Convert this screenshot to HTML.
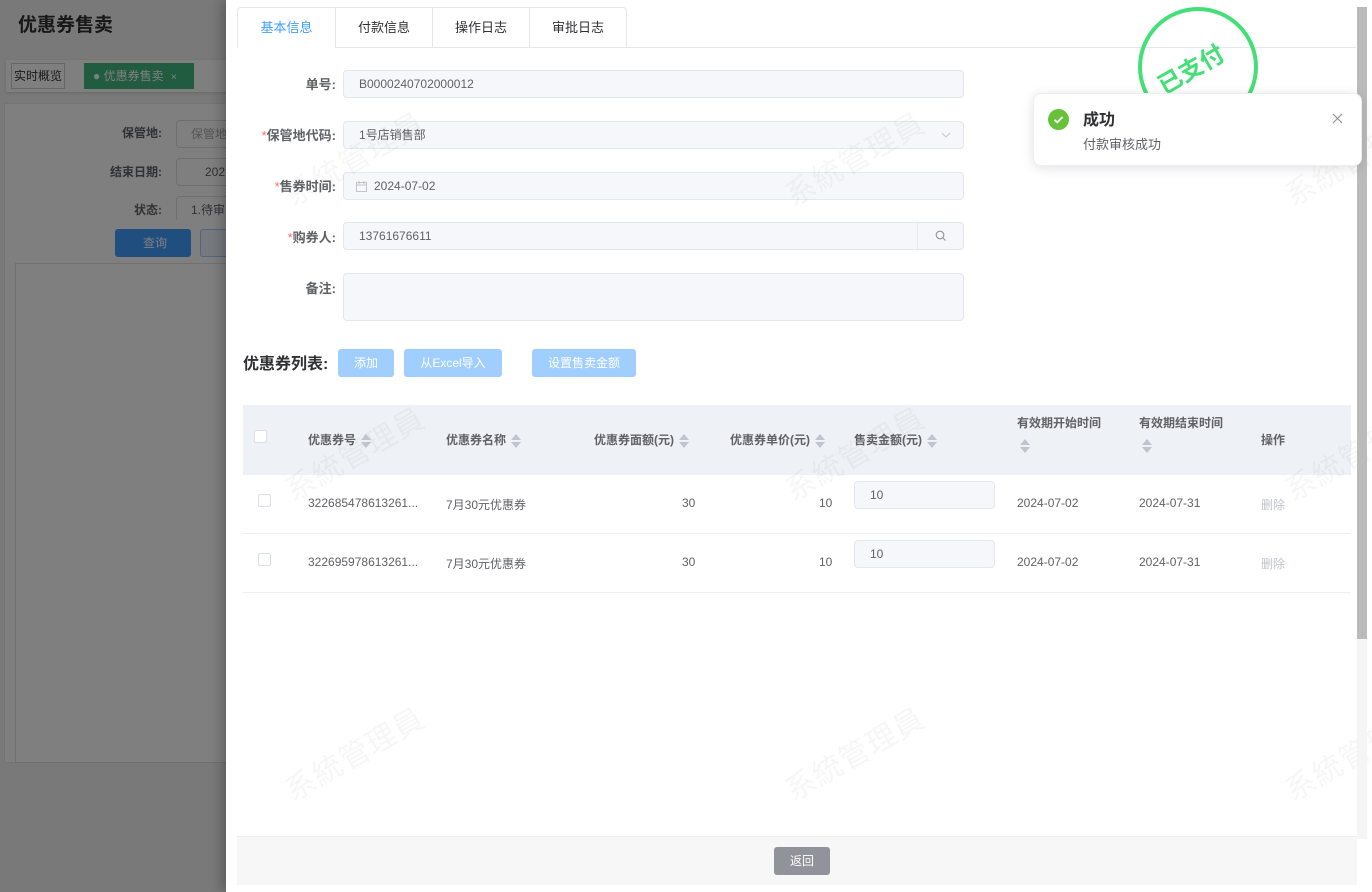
<!DOCTYPE html>
<html><head><meta charset="utf-8"><style>
*{box-sizing:border-box;margin:0;padding:0}
body{width:1372px;height:892px;overflow:hidden;position:relative;font-family:"Liberation Sans","Noto Sans CJK SC",sans-serif;font-size:12px;color:#606266;background:#f3f3f3}
.abs{position:absolute}
.mask{position:absolute;left:0;top:0;width:1372px;height:892px;background:rgba(0,0,0,.5)}
.drawer{position:absolute;left:226px;top:0;width:1146px;height:892px;background:#fff;box-shadow:-4px 0 12px rgba(0,0,0,.25);overflow:hidden}
.tabs{position:absolute;left:11px;top:7px;height:41px;display:flex;border:1px solid #e4e7ed;border-bottom:none;border-radius:4px 4px 0 0}
.tab{width:97px;height:40px;line-height:40px;text-align:center;font-size:13px;color:#303133;border-left:1px solid #e4e7ed}
.tab:first-child{border-left:none;color:#409eff;width:97px}
.tabline{position:absolute;left:110px;top:47px;width:1020px;height:1px;background:#e4e7ed}
.lbl{position:absolute;width:110px;text-align:right;font-size:13px;font-weight:bold;color:#606266}
.lbl i{color:#f56c6c;font-style:normal;font-weight:normal}
.inp{position:absolute;left:117px;width:621px;height:28px;background:#f5f7fa;border:1px solid #e4e7ed;border-radius:4px;line-height:26px;padding-left:15px;color:#606266;font-size:12px}
.btn{position:absolute;height:28px;line-height:28px;text-align:center;color:#fff;background:#a0cfff;border-radius:3px;font-size:12px}
.th{position:absolute;font-weight:bold;color:#606266;font-size:12px}
.sort{display:inline-block;width:10px;height:14px;vertical-align:middle;margin-left:5px;position:relative}
.sort:before{content:"";position:absolute;left:0;top:0;border:5px solid transparent;border-bottom:6px solid #c0c4cc;border-top:0}
.sort:after{content:"";position:absolute;left:0;top:8px;border:5px solid transparent;border-top:6px solid #c0c4cc;border-bottom:0}
.td{position:absolute;font-size:12px;color:#606266}
.cb{position:absolute;width:13px;height:13px;border:1px solid #dcdfe6;border-radius:2px;background:#fff}
.wm{position:absolute;font-size:30px;color:rgba(0,0,0,.035);transform:rotate(-30deg);white-space:nowrap;letter-spacing:1px}
</style></head><body>
<div class="abs" style="left:18px;top:10px;font-size:19px;font-weight:bold;color:#303133">优惠券售卖</div>
<div class="abs" style="left:6px;top:60px;width:230px;height:32px;background:#fff;box-shadow:0 1px 3px rgba(0,0,0,.15)"></div>
<div class="abs" style="left:11px;top:63px;width:54px;height:26px;border:1px solid #ccc;background:#fff;line-height:24px;text-align:center;font-size:12px;color:#333">实时概览</div>
<div class="abs" style="left:84px;top:63px;width:110px;height:26px;background:#42b983;color:#fff;line-height:26px;padding-left:9px;font-size:12px">● 优惠券售卖 <span style="font-size:10px;margin-left:4px">×</span></div>
<div class="abs" style="left:4px;top:103px;width:240px;height:660px;background:#fff;border:1px solid #e8e8e8"></div>
<div class="abs" style="left:100px;top:124px;font-weight:bold;font-size:12px;color:#606266;width:62px;text-align:right">保管地:</div>
<div class="abs" style="left:176px;top:120px;width:60px;height:28px;border:1px solid #dcdfe6;border-radius:4px;padding-left:14px;line-height:26px;color:#aaa">保管地</div>
<div class="abs" style="left:100px;top:163px;font-weight:bold;color:#606266;width:62px;text-align:right">结束日期:</div>
<div class="abs" style="left:176px;top:158px;width:60px;height:28px;border:1px solid #dcdfe6;border-radius:4px;padding-left:28px;line-height:26px;color:#606266">202</div>
<div class="abs" style="left:100px;top:201px;font-weight:bold;color:#606266;width:62px;text-align:right">状态:</div>
<div class="abs" style="left:176px;top:196px;width:60px;height:24px;border:1px solid #dcdfe6;border-bottom:none;border-radius:4px 4px 0 0;padding-left:14px;line-height:26px;color:#606266">1.待审</div>
<div class="abs" style="left:115px;top:229px;width:76px;height:28px;background:#409eff;border-radius:3px;color:#fff;line-height:28px;padding-left:28px">查询</div>
<div class="abs" style="left:200px;top:229px;width:40px;height:28px;border:1px solid #a0cfff;background:#ecf5ff;border-radius:3px"></div>
<div class="abs" style="left:15px;top:263px;width:225px;height:500px;border:1px solid #e0e0e0"></div>
<div class="mask"></div>

<div class="drawer">
  <div class="tabs"><div class="tab">基本信息</div><div class="tab">付款信息</div><div class="tab">操作日志</div><div class="tab">审批日志</div></div>
  <div class="tabline"></div>

  <div class="lbl" style="left:0;top:74px">单号:</div>
  <div class="inp" style="top:70px">B0000240702000012</div>
  <div class="lbl" style="left:0;top:125px"><i>*</i>保管地代码:</div>
  <div class="inp" style="top:121px">1号店销售部<svg style="position:absolute;right:12px;top:9px" width="10" height="8" viewBox="0 0 10 8"><path d="M1 2l4 4 4-4" fill="none" stroke="#c0c4cc" stroke-width="1"/></svg></div>
  <div class="lbl" style="left:0;top:176px"><i>*</i>售券时间:</div>
  <div class="inp" style="top:172px;padding-left:30px"><svg style="position:absolute;left:12px;top:8px" width="11" height="11" viewBox="0 0 11 11"><rect x="0.5" y="1.5" width="10" height="9" fill="none" stroke="#c0c4cc"/><path d="M0.5 4h10M3 0v3M8 0v3" stroke="#c0c4cc"/></svg>2024-07-02</div>
  <div class="lbl" style="left:0;top:227px"><i>*</i>购券人:</div>
  <div class="inp" style="top:222px">13761676611<span style="position:absolute;right:0;top:-1px;width:46px;height:28px;border-left:1px solid #e4e7ed;text-align:center;color:#909399"><svg width="12" height="12" viewBox="0 0 12 12" style="margin-top:8px"><circle cx="5" cy="5" r="3.8" fill="none" stroke="#909399" stroke-width="1.1"/><path d="M8 8l2.5 2.5" stroke="#909399" stroke-width="1.1"/></svg></span></div>
  <div class="lbl" style="left:0;top:278px">备注:</div>
  <div class="inp" style="top:273px;height:48px"></div>

  <div class="abs" style="left:17px;top:350px;font-size:16px;font-weight:bold;color:#303133">优惠券列表:</div>
  <div class="btn" style="left:112px;top:349px;width:56px">添加</div>
  <div class="btn" style="left:178px;top:349px;width:98px">从Excel导入</div>
  <div class="btn" style="left:306px;top:349px;width:104px">设置售卖金额</div>

  <div class="abs" style="left:17px;top:405px;width:1108px;height:70px;background:#eef1f6"></div>
  <div class="cb" style="left:28px;top:430px"></div>
  <div class="th" style="left:82px;top:431px">优惠券号<span class="sort"></span></div>
  <div class="th" style="left:220px;top:431px">优惠券名称<span class="sort"></span></div>
  <div class="th" style="left:368px;top:431px">优惠券面额(元)<span class="sort"></span></div>
  <div class="th" style="left:504px;top:431px">优惠券单价(元)<span class="sort"></span></div>
  <div class="th" style="left:628px;top:431px">售卖金额(元)<span class="sort"></span></div>
  <div class="th" style="left:791px;top:414px">有效期开始时间<br><span class="sort" style="margin:8px 0 0 3px"></span></div>
  <div class="th" style="left:913px;top:414px">有效期结束时间<br><span class="sort" style="margin:8px 0 0 3px"></span></div>
  <div class="th" style="left:1035px;top:431px">操作</div>

  <div class="cb" style="left:32px;top:494px"></div>
  <div class="td" style="left:82px;top:496px">322685478613261...</div>
  <div class="td" style="left:220px;top:496px">7月30元优惠券</div>
  <div class="td" style="left:456px;top:496px">30</div>
  <div class="td" style="left:593px;top:496px">10</div>
  <div class="inp" style="left:628px;top:481px;width:141px">10</div>
  <div class="td" style="left:791px;top:496px">2024-07-02</div>
  <div class="td" style="left:913px;top:496px">2024-07-31</div>
  <div class="td" style="left:1035px;top:496px;color:#c0c4cc">删除</div>
  <div class="abs" style="left:17px;top:533px;width:1108px;height:1px;background:#ebeef5"></div>

  <div class="cb" style="left:32px;top:553px"></div>
  <div class="td" style="left:82px;top:555px">322695978613261...</div>
  <div class="td" style="left:220px;top:555px">7月30元优惠券</div>
  <div class="td" style="left:456px;top:555px">30</div>
  <div class="td" style="left:593px;top:555px">10</div>
  <div class="inp" style="left:628px;top:540px;width:141px">10</div>
  <div class="td" style="left:791px;top:555px">2024-07-02</div>
  <div class="td" style="left:913px;top:555px">2024-07-31</div>
  <div class="td" style="left:1035px;top:555px;color:#c0c4cc">删除</div>
  <div class="abs" style="left:17px;top:592px;width:1108px;height:1px;background:#ebeef5"></div>

  <div class="wm" style="left:50px;top:135px">系統管理員</div>
  <div class="wm" style="left:550px;top:135px">系統管理員</div>
  <div class="wm" style="left:1050px;top:135px">系統管理員</div>
  <div class="wm" style="left:50px;top:430px">系統管理員</div>
  <div class="wm" style="left:550px;top:430px">系統管理員</div>
  <div class="wm" style="left:1050px;top:430px">系統管理員</div>
  <div class="wm" style="left:50px;top:730px">系統管理員</div>
  <div class="wm" style="left:550px;top:730px">系統管理員</div>
  <div class="wm" style="left:1050px;top:730px">系統管理員</div>

  <div class="abs" style="left:912px;top:7px;width:120px;height:120px;border:4px solid #44e077;border-radius:50%"></div>
  <div class="abs" style="left:928px;top:50px;font-size:24px;font-weight:bold;color:#44e077;transform:rotate(-30deg)">已支付</div>

  <div class="abs" style="left:11px;top:836px;width:1120px;height:49px;background:#f7f7f7;border-top:1px solid #eee"></div>
  <div class="abs" style="left:548px;top:847px;width:56px;height:28px;background:#909399;border-radius:3px;color:#fff;text-align:center;line-height:28px;font-size:12px">返回</div>

  <div class="abs" style="left:1131px;top:7px;width:10px;height:632px;background:#bbb"></div>
  <div class="abs" style="left:1131px;top:639px;width:10px;height:200px;background:#f5f5f5"></div>
</div>

<div class="abs" style="left:1033px;top:93px;width:329px;height:73px;background:#fff;border:1px solid #ebeef5;border-radius:8px;box-shadow:0 2px 12px rgba(0,0,0,.12)">
  <div class="abs" style="left:14px;top:15px;width:21px;height:21px;border-radius:50%;background:#67c23a"><svg width="21" height="21" viewBox="0 0 21 21"><path d="M6.5 10.8l2.8 2.6 5.2-5.4" fill="none" stroke="#fff" stroke-width="1.8"/></svg></div>
  <div class="abs" style="left:49px;top:12px;font-size:16px;font-weight:bold;color:#303133">成功</div>
  <div class="abs" style="left:49px;top:40px;font-size:13px;color:#606266">付款审核成功</div>
  <svg class="abs" style="left:298px;top:19px" width="11" height="11" viewBox="0 0 11 11"><path d="M1 1l9 9M10 1l-9 9" stroke="#909399" stroke-width="1.2"/></svg>
</div>
</body></html>
